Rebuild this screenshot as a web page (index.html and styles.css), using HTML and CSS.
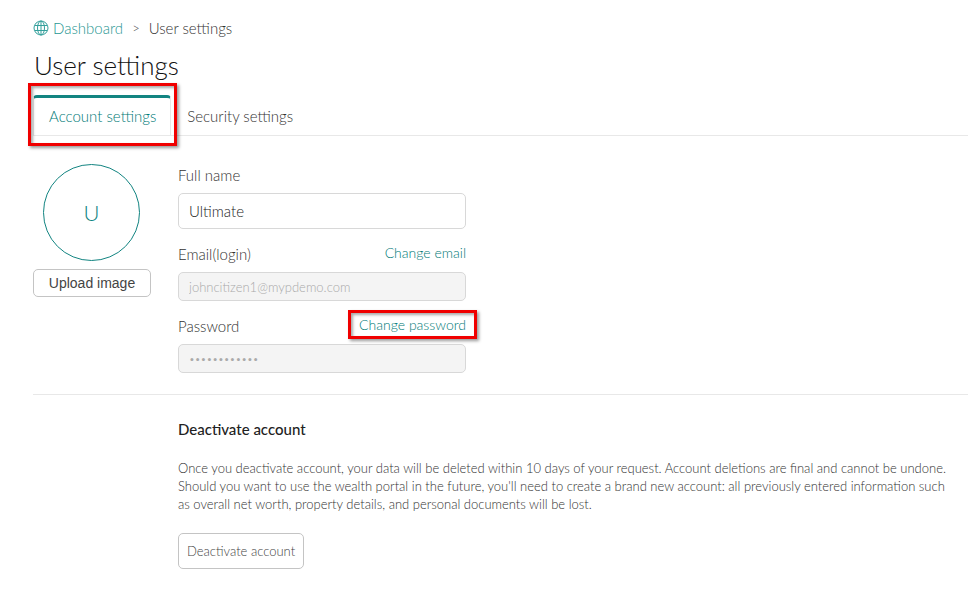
FILE: index.html
```html
<!DOCTYPE html>
<html lang="en">
<head>
<meta charset="utf-8">
<meta name="viewport" content="width=device-width, initial-scale=1">
<title>User settings</title>
<link rel="stylesheet" href="styles.css">
</head>
<body>
<main class="page">
  <nav class="breadcrumb" aria-label="Breadcrumb">
    <a class="crumb-link" href="#"><svg class="globe" viewBox="0 0 16 16" aria-hidden="true"><circle cx="8" cy="8" r="7"/><ellipse cx="8" cy="8" rx="3.5" ry="7"/><path d="M8 1v14M1.8 5.5h12.4M1.8 10.5h12.4"/></svg>Dashboard</a>
    <span class="separator">&gt;</span>
    <span>User settings</span>
  </nav>
  <h1 class="title">User settings</h1>
  <nav class="tabs" aria-label="Settings">
    <a class="tab tab-active" href="#" aria-current="page">Account settings</a>
    <a class="tab" href="#">Security settings</a>
  </nav>
  <section class="row profile">
    <div class="avatar-column">
      <div class="avatar">U</div>
      <button class="button upload" type="button">Upload image</button>
    </div>
    <form class="form">
      <div class="field">
        <div class="field-head"><label for="name">Full name</label></div>
        <input class="input input-large" id="name" type="text" value="Ultimate">
      </div>
      <div class="field">
        <div class="field-head"><label for="email">Email(login)</label><a class="change" href="#">Change email</a></div>
        <input class="input" id="email" type="email" value="johncitizen1@mypdemo.com" disabled>
      </div>
      <div class="field">
        <div class="field-head"><label for="password">Password</label><a class="change marked" href="#">Change password</a></div>
        <input class="input secret" id="password" type="password" value="123456789012" disabled>
      </div>
    </form>
  </section>
  <section class="row danger">
    <div class="danger-body">
      <h2 class="subtitle">Deactivate account</h2>
      <p class="note">Once you deactivate account, your data will be deleted within 10 days of your request. Account deletions are final and cannot be undone. Should you want to use the wealth portal in the future, you'll need to create a brand new account: all previously entered information such as overall net worth, property details, and personal documents will be lost.</p>
      <button class="button deactivate" type="button">Deactivate account</button>
    </div>
  </section>
</main>
</body>
</html>
```

FILE: styles.css
```css
* { box-sizing: border-box; }

body {
  margin: 0;
  background: #fff;
  color: #333;
  font: 300 14px/20px Lato, "Liberation Sans", sans-serif;
}

a { color: #007a77; text-decoration: none; }

.page { padding: 18px 0 30px 33px; }

.breadcrumb {
  display: flex;
  gap: 9px;
  font-size: 15px;
}

.crumb-link {
  display: flex;
  align-items: center;
  gap: 4px;
  color: #1f9692;
}

.globe {
  width: 16px;
  height: 16px;
  fill: none;
  stroke: #34a09c;
}

.separator { color: #555; font-size: 13px; }

.title {
  margin: 11px 0 14px 1px;
  color: #111;
  font-size: 26px;
  font-weight: 300;
  line-height: 32px;
}

.tabs {
  display: flex;
  border-bottom: 1px solid #e8e8e8;
}

.tab {
  padding: 9px 16px 10px;
  border-top: 3px solid transparent;
  color: #333;
  font-size: 15px;
  line-height: 18px;
}

.tab-active {
  position: relative;
  padding-right: 14px;
  padding-left: 15px;
  border-right: 1px solid #e8e8e8;
  border-left: 1px solid #e8e8e8;
  border-top-color: #128481;
  border-radius: 4px 4px 0 0;
  color: #007a77;
}

.tab-active::after,
.marked::after {
  position: absolute;
  border: 3px solid #f00000;
  box-shadow: 2px 2px 3px #0006, inset 2px 2px 3px #0005;
  content: "";
  pointer-events: none;
}

.tab-active::after { inset: -15px -7px -11px -6px; }

.row {
  display: grid;
  grid-template-columns: 118px minmax(0, 1fr);
  column-gap: 27px;
}

.profile {
  padding: 28px 0 21px;
  border-bottom: 1px solid #e8e8e8;
}

.avatar-column {
  display: flex;
  flex-direction: column;
  gap: 8px;
}

.avatar {
  display: grid;
  place-items: center;
  width: 97px;
  height: 97px;
  margin-left: 10px;
  border: 1px solid #128481;
  border-radius: 50%;
  color: #128481;
  font-size: 22px;
  line-height: 24px;
}

.button {
  border: 1px solid #c4c4c4;
  border-radius: 5px;
  background: #fff;
  color: #444;
  font: inherit;
}

.upload {
  width: 100%;
  height: 28px;
  padding: 0;
  font: 400 14px/18px "Liberation Sans", sans-serif;
}

.form {
  display: flex;
  flex-direction: column;
  gap: 14px;
  max-width: 288px;
}

.field-head {
  display: flex;
  align-items: flex-start;
  justify-content: space-between;
  height: 29px;
  font-size: 15px;
  line-height: 22px;
}

.change { position: relative; font-size: 14px; line-height: 20px; }

.marked::after { inset: -5px -11px -4px; }

.input {
  display: block;
  width: 100%;
  height: 29px;
  padding: 0 10px;
  border: 1px solid #d8d8d8;
  border-radius: 5px;
  background: #fff;
  color: #222;
  font: inherit;
  font-size: 13px;
}

.input-large { height: 36px; font-size: 15px; }

.input:disabled { background: #f4f4f4; color: #aaa; }

.secret { font-size: 10px; }

.danger { padding-top: 24px; }

.danger-body { grid-column: 2; }

.subtitle {
  margin: 0 0 20px;
  color: #222;
  font-size: 15px;
  font-weight: 500;
  line-height: 20px;
}

.note {
  margin: 0 9px 20px 0;
  color: #333;
  font-size: 13px;
  line-height: 18px;
}

.deactivate { height: 36px; padding: 0 8px; font-size: 13px; }
```
